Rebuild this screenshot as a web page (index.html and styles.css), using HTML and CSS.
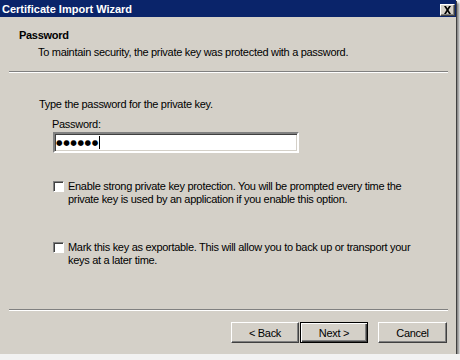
FILE: index.html
```html
<!DOCTYPE html>
<html lang="en">

<head>
    <meta charset="UTF-8">
    <title>Certificate Import Wizard</title>
    <link rel="stylesheet" href="styles.css">
</head>

<body>
    <div class="window">
        <div class="titlebar">
            <span class="title">Certificate Import Wizard</span>
            <button class="close-btn" type="button">
                <svg width="9" height="8" viewBox="0 0 9 8">
                    <path d="M1 0h2l1.5 2.5L6 0h2L5.5 4 8 8H6L4.5 5.5 3 8H1l2.5-4z" fill="#000" />
                </svg>
            </button>
        </div>

        <div class="header">
            <div class="header-title">Password</div>
            <div class="header-sub">To maintain security, the private key was protected with a password.</div>
        </div>
        <div class="separator"></div>

        <div class="content">
            <p class="intro">Type the password for the private key.</p>

            <div class="field">
                <label for="pwd">Password:</label>
                <div class="textbox" id="pwd"><span class="dots">&#9679;&#9679;&#9679;&#9679;&#9679;&#9679;</span><span class="caret"></span></div>
            </div>

            <div class="option first">
                <span class="checkbox"></span>
                <span class="option-text">Enable strong private key protection. You will be prompted every time the private key is used by an application if you enable this option.</span>
            </div>

            <div class="option second">
                <span class="checkbox"></span>
                <span class="option-text">Mark this key as exportable. This will allow you to back up or transport your keys at a later time.</span>
            </div>
        </div>

        <div class="separator footer-sep"></div>
        <div class="buttons">
            <button class="btn" type="button">&lt; Back</button>
            <button class="btn default" type="button">Next &gt;</button>
            <button class="btn cancel" type="button">Cancel</button>
        </div>
    </div>
</body>

</html>
```

FILE: styles.css
```css
:root {
    --face-color: #d4d0c8;
    --title-color: #0a246a;
    --shadow-color: #808080;
    --dark-color: #404040;
    --ui-font: 'Liberation Sans', Arial, sans-serif;
}

body {
    margin: 0;
    background: #f2f2f2;
    font-family: var(--ui-font);
    font-size: 11px;
    letter-spacing: -0.3px;
    color: #000;
}

.window {
    width: 456px;
    height: 354px;
    background: var(--face-color);
    display: flex;
    flex-direction: column;
    box-shadow: 1px 1px 0 #404040, 3px 3px 2px rgba(0, 0, 0, 0.45);
}

.titlebar {
    height: 17px;
    background: var(--title-color);
    display: flex;
    align-items: center;
    justify-content: space-between;
    padding: 0 1px 0 2px;
}

.title {
    color: #fff;
    font-weight: bold;
    font-size: 11px;
    letter-spacing: 0;
}

.close-btn {
    width: 15px;
    height: 12px;
    padding: 0;
    margin-top: 2px;
    background: var(--face-color);
    border: 1px solid;
    border-color: #fff #404040 #404040 #fff;
    box-shadow: inset -1px -1px 0 var(--shadow-color);
    display: flex;
    align-items: center;
    justify-content: center;
}

.header {
    padding: 12px 0 0 19px;
    height: 42px;
}

.header-title {
    font-weight: bold;
    line-height: 13px;
}

.header-sub {
    margin: 4px 0 0 19px;
    line-height: 13px;
}

.separator {
    margin: 0 8px 0 9px;
    height: 1px;
    background: var(--shadow-color);
    border-bottom: 1px solid #fff;
}

.content {
    padding: 25px 0 0 39px;
}

.intro {
    margin: 0;
    line-height: 13px;
}

.field {
    margin: 7px 0 0 13px;
}

.field label {
    display: block;
    line-height: 13px;
}

.textbox {
    margin: 1px 0 0 1px;
    width: 241px;
    height: 17px;
    background: #fff;
    border: 2px solid;
    border-color: var(--shadow-color) #fff #fff var(--shadow-color);
    box-shadow: inset 1px 1px 0 var(--dark-color), inset -1px -1px 0 var(--face-color);
    display: flex;
    align-items: center;
    padding-left: 1px;
}

.dots {
    font-family: 'DejaVu Sans', sans-serif;
    font-size: 7.5px;
    letter-spacing: 0.6px;
}

.caret {
    width: 1px;
    height: 13px;
    background: #000;
    margin-left: 0;
}

.option {
    display: flex;
    gap: 4px;
    margin-left: 14px;
    width: 358px;
}

.option.first {
    margin-top: 27px;
}

.option.second {
    margin-top: 35px;
}

.checkbox {
    flex: none;
    width: 9px;
    height: 9px;
    margin-top: 1px;
    background: #fff;
    border: 1px solid;
    border-color: var(--shadow-color) #fff #fff var(--shadow-color);
    box-shadow: inset 1px 1px 0 var(--dark-color), 1px 1px 0 var(--face-color);
}

.option-text {
    line-height: 13px;
}

.footer-sep {
    margin-top: auto;
}

.buttons {
    display: flex;
    justify-content: flex-end;
    padding: 11px 9px 11px 0;
    gap: 1px;
}

.btn {
    width: 68px;
    height: 21px;
    padding: 0;
    background: var(--face-color);
    font-family: var(--ui-font);
    font-size: 11px;
    letter-spacing: -0.3px;
    color: #000;
    border: 1px solid;
    border-color: #fff var(--dark-color) var(--dark-color) #fff;
    box-shadow: inset -1px -1px 0 var(--shadow-color);
}

.btn.default {
    border: 1px solid #000;
    box-shadow: inset 1px 1px 0 #fff, inset -1px -1px 0 var(--dark-color), inset -2px -2px 0 var(--shadow-color);
}

.btn.cancel {
    margin-left: 9px;
    width: 69px;
}
```
